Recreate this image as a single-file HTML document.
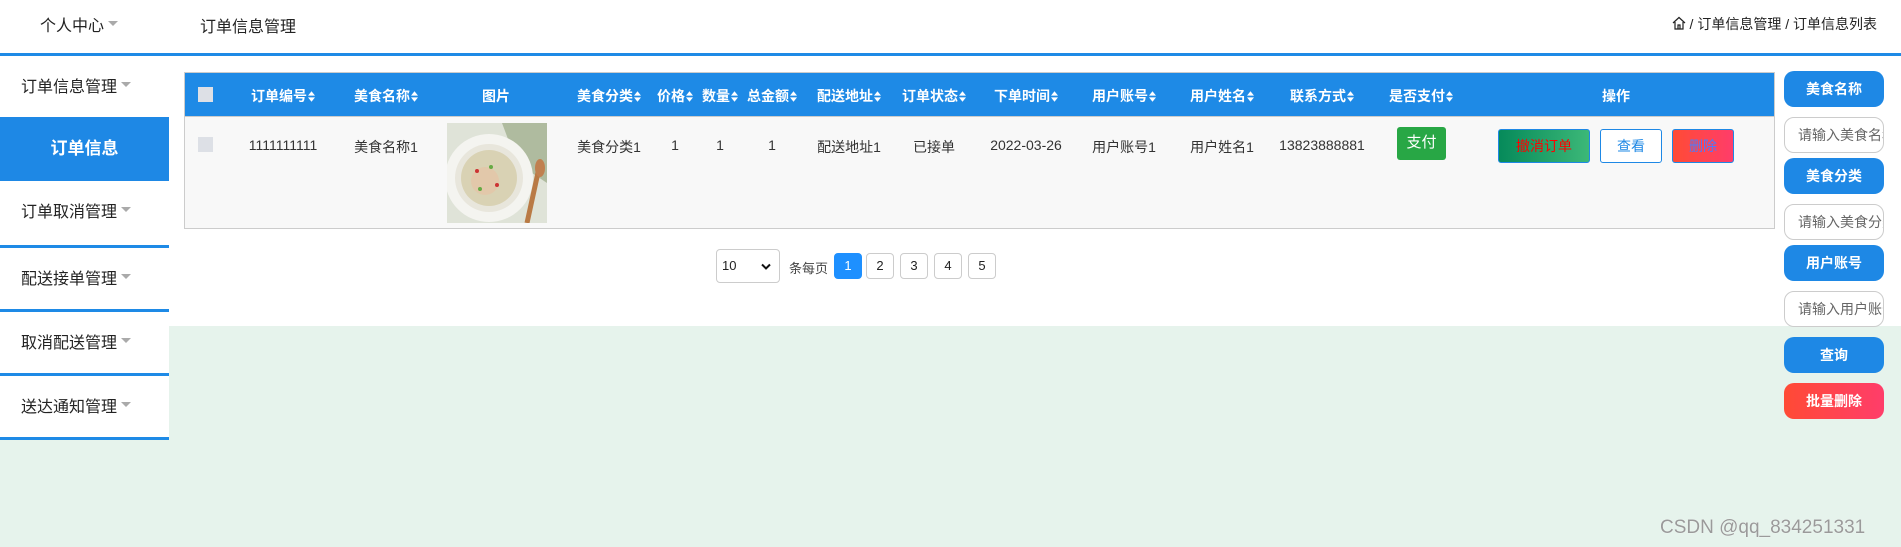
<!DOCTYPE html>
<html><head><meta charset="utf-8">
<style>
*{box-sizing:border-box;margin:0;padding:0}
body{width:1901px;height:547px;position:relative;overflow:hidden;background:#e6f3ec;font-family:"Liberation Sans","Noto Sans CJK SC",sans-serif;color:#333}
.a{position:absolute}
.hdr{left:0;top:0;width:1901px;height:53px;background:#fff}
.hline{left:0;top:53px;width:1901px;height:3px;background:#1e8ae6}
.white{left:169px;top:56px;width:1732px;height:270px;background:#fff}
.side{left:0;top:56px;width:169px;height:384px;background:#fff}
.si{position:absolute;left:0;width:169px;height:64px;font-size:16px;color:#222;padding-left:21px;line-height:64px}
.si .ar{display:inline-block;width:0;height:0;border-left:5px solid transparent;border-right:5px solid transparent;border-top:5px solid #aaa;margin-left:4px;vertical-align:middle;position:relative;top:-3px}
.bl{position:absolute;left:0;width:169px;height:3px;background:#1e8ae6}
.tbl{left:184px;top:72px;width:1591px;height:157px;border:1px solid #ccc;background:#f8f8f8}
.th{left:185px;top:73px;width:1589px;height:44px;background:#1e8ae6;border-bottom:1px solid #ccc}
.h{position:absolute;top:86px;color:#fff;font-weight:bold;font-size:14px;transform:translateX(-50%);white-space:nowrap}
.h svg{vertical-align:-1px;margin-left:1px}
.c{position:absolute;top:137px;font-size:14px;color:#333;transform:translateX(-50%);white-space:nowrap}
.cb{width:15px;height:15px;background:#dde0e6;position:absolute}
.btn{position:absolute;font-size:14px;text-align:center;border-radius:3px}
.rb{position:absolute;left:1784px;width:100px;height:36px;border-radius:10px;background:#1e88e5;color:#fff;font-size:14px;font-weight:bold;text-align:center;line-height:36px}
.ri{position:absolute;left:1784px;width:100px;height:36px;border-radius:10px;border:1px solid #ccc;background:#fff;color:#666;font-size:14px;line-height:34px;padding-left:13px;overflow:hidden;white-space:nowrap}
.pg{position:absolute;top:253px;width:28px;height:26px;border:1px solid #ccc;border-radius:4px;background:#fff;font-size:13px;text-align:center;line-height:24px;color:#222}
</style></head><body>
<svg width="0" height="0" style="position:absolute"><defs><symbol id="s" viewBox="0 0 8 12"><path d="M4 0 L8 5 H0 Z M0 7 H8 L4 12 Z" fill="#fff"/></symbol></defs></svg>
<div class="a hdr"></div>
<div class="a" style="left:40px;top:12px;font-size:16px;color:#222">个人中心<span style="display:inline-block;border-left:5px solid transparent;border-right:5px solid transparent;border-top:5px solid #aaa;margin-left:4px;vertical-align:middle;position:relative;top:-3px"></span></div>
<div class="a" style="left:200px;top:13px;font-size:16px;color:#222">订单信息管理</div>
<div class="a" style="right:24px;top:14px;font-size:14px;color:#222"><svg width="14" height="14" viewBox="0 0 14 14" style="vertical-align:-1px"><path d="M1 7 L7 1.5 L13 7 M3 6 V13 H11 V6 M6 13 V9 H8 V13" fill="none" stroke="#222" stroke-width="1.2"/></svg> / 订单信息管理 / 订单信息列表</div>
<div class="a hline"></div>
<div class="a white"></div>
<div class="a side">
<div class="si" style="top:0">订单信息管理<span class="ar"></span></div>
<div class="si" style="top:61px;height:64px;background:#1e88e5;color:#fff;font-weight:bold;font-size:17px;text-align:center;padding-left:0;line-height:64px">订单信息</div>
<div class="si" style="top:125px">订单取消管理<span class="ar"></span></div>
<div class="bl" style="top:189px"></div>
<div class="si" style="top:192px">配送接单管理<span class="ar"></span></div>
<div class="bl" style="top:253px"></div>
<div class="si" style="top:256px">取消配送管理<span class="ar"></span></div>
<div class="bl" style="top:317px"></div>
<div class="si" style="top:320px">送达通知管理<span class="ar"></span></div>
<div class="bl" style="top:381px"></div>
</div>
<div class="a tbl"></div>
<div class="a th"></div>
<div class="cb" style="left:198px;top:87px"></div>
<div class="h" style="left:283px">订单编号<svg width="7" height="11"><use href="#s"/></svg></div>
<div class="h" style="left:386px">美食名称<svg width="7" height="11"><use href="#s"/></svg></div>
<div class="h" style="left:496px">图片</div>
<div class="h" style="left:609px">美食分类<svg width="7" height="11"><use href="#s"/></svg></div>
<div class="h" style="left:675px">价格<svg width="7" height="11"><use href="#s"/></svg></div>
<div class="h" style="left:720px">数量<svg width="7" height="11"><use href="#s"/></svg></div>
<div class="h" style="left:772px">总金额<svg width="7" height="11"><use href="#s"/></svg></div>
<div class="h" style="left:849px">配送地址<svg width="7" height="11"><use href="#s"/></svg></div>
<div class="h" style="left:934px">订单状态<svg width="7" height="11"><use href="#s"/></svg></div>
<div class="h" style="left:1026px">下单时间<svg width="7" height="11"><use href="#s"/></svg></div>
<div class="h" style="left:1124px">用户账号<svg width="7" height="11"><use href="#s"/></svg></div>
<div class="h" style="left:1222px">用户姓名<svg width="7" height="11"><use href="#s"/></svg></div>
<div class="h" style="left:1322px">联系方式<svg width="7" height="11"><use href="#s"/></svg></div>
<div class="h" style="left:1421px">是否支付<svg width="7" height="11"><use href="#s"/></svg></div>
<div class="h" style="left:1616px">操作</div>
<div class="cb" style="left:198px;top:137px"></div>
<div class="c" style="left:283px">1111111111</div>
<div class="c" style="left:386px">美食名称1</div>
<svg class="a" style="left:447px;top:123px" width="100" height="100" viewBox="0 0 100 100">
<rect width="100" height="100" fill="#dfe3d8"/>
<path d="M55 0 L100 0 L100 60 L70 40 Z" fill="#8fa07a" opacity=".6"/>
<circle cx="42" cy="55" r="44" fill="#f4f4f0"/>
<circle cx="42" cy="55" r="34" fill="#e8e6dc"/>
<circle cx="42" cy="55" r="28" fill="#d9d2b4"/>
<circle cx="38" cy="58" r="14" fill="#e3c6a8" opacity=".8"/>
<circle cx="30" cy="48" r="2" fill="#c33"/><circle cx="50" cy="62" r="2" fill="#c33"/><circle cx="44" cy="44" r="2" fill="#6a4"/><circle cx="33" cy="66" r="2" fill="#6a4"/>
<path d="M92 45 L80 100" stroke="#b97a45" stroke-width="5"/>
<ellipse cx="93" cy="45" rx="5" ry="9" fill="#c08050"/>
</svg>
<div class="c" style="left:609px">美食分类1</div>
<div class="c" style="left:675px">1</div>
<div class="c" style="left:720px">1</div>
<div class="c" style="left:772px">1</div>
<div class="c" style="left:849px">配送地址1</div>
<div class="c" style="left:934px">已接单</div>
<div class="c" style="left:1026px">2022-03-26</div>
<div class="c" style="left:1124px">用户账号1</div>
<div class="c" style="left:1222px">用户姓名1</div>
<div class="c" style="left:1322px">13823888881</div>
<div class="btn" style="left:1397px;top:127px;width:49px;height:33px;background:#28a745;color:#fff;line-height:31px;font-size:15px">支付</div>
<div class="btn" style="left:1498px;top:129px;width:92px;height:34px;background:linear-gradient(90deg,#068a5a,#3cb878);color:#f00;border:1px solid #1e88e5;line-height:32px">撤消订单</div>
<div class="btn" style="left:1600px;top:129px;width:62px;height:34px;background:#fff;color:#1e88e5;border:1px solid #1e88e5;line-height:32px">查看</div>
<div class="btn" style="left:1672px;top:129px;width:62px;height:34px;background:linear-gradient(90deg,#ff4b35,#ff3d6a);color:#4a7bff;border:1px solid #1e88e5;line-height:32px">删除</div>
<div class="a" style="left:716px;top:249px;width:64px;height:34px;border:1px solid #ccc;border-radius:4px;background:#fff;font-size:13px;line-height:32px;padding-left:5px;color:#222">10<svg width="10" height="8" viewBox="0 0 10 8" style="position:absolute;right:8px;top:13px"><path d="M1 1.5 L5 5.5 L9 1.5" fill="none" stroke="#111" stroke-width="2"/></svg></div>
<div class="a" style="left:789px;top:258px;font-size:13px;color:#444">条每页</div>
<div class="pg" style="left:834px;background:#1e90ff;border-color:#1e90ff;color:#fff">1</div>
<div class="pg" style="left:866px">2</div>
<div class="pg" style="left:900px">3</div>
<div class="pg" style="left:934px">4</div>
<div class="pg" style="left:968px">5</div>
<div class="rb" style="top:71px">美食名称</div>
<div class="ri" style="top:117px">请输入美食名称</div>
<div class="rb" style="top:158px">美食分类</div>
<div class="ri" style="top:204px">请输入美食分类</div>
<div class="rb" style="top:245px">用户账号</div>
<div class="ri" style="top:291px">请输入用户账号</div>
<div class="rb" style="top:337px">查询</div>
<div class="rb" style="top:383px;background:linear-gradient(90deg,#ff4a35,#ff3d6a)">批量删除</div>
<div class="a" style="left:1660px;top:517px;font-size:19px;color:#9a9a9a;text-shadow:0 0 1px #fff">CSDN @qq_834251331</div>
</body></html>
